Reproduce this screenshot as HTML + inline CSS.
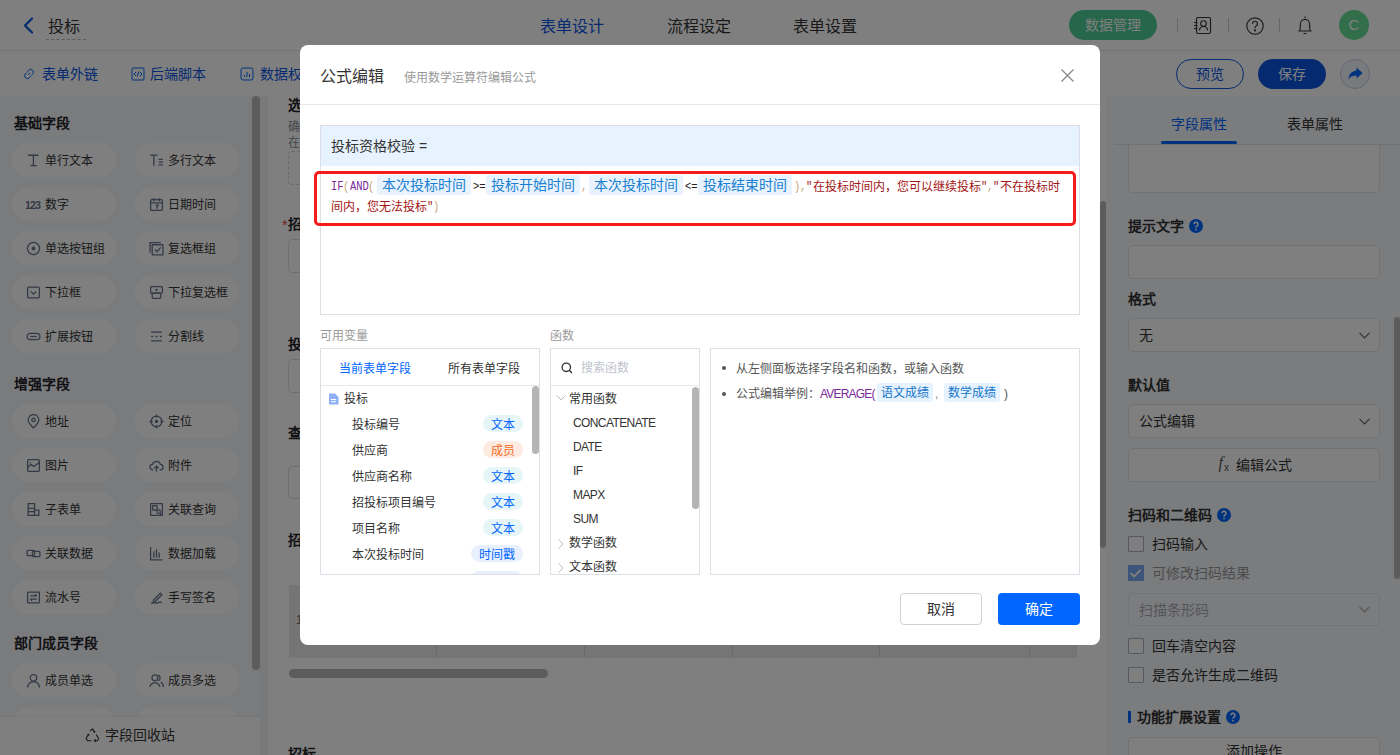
<!DOCTYPE html>
<html lang="zh-CN"><head><meta charset="utf-8">
<style>
*{box-sizing:border-box;margin:0;padding:0}
html,body{width:1400px;height:755px;overflow:hidden;background:#fff;font-family:"Liberation Sans",sans-serif;color:#333;font-size:14px}
.a{position:absolute}
.nw{white-space:nowrap}
/* header */
#hdr{left:0;top:0;width:1400px;height:51px;background:#fff;border-bottom:1px solid #e8e8e8}
#tb{left:0;top:51px;width:1400px;height:45px;background:#fff}
#lp{left:0;top:96px;width:260px;height:659px;background:#f5f7fa}
.sec{font-weight:bold;font-size:14px;color:#1f2329;left:14px}
.pill{height:34px;width:104px;border-radius:17px;background:#fff;font-size:12px;color:#333;line-height:34px}
.pill .ic{position:absolute;left:13.5px;top:10px;width:15px;height:15px}
.pill span{position:absolute;left:33px;top:1px}
#ctr{left:260px;top:96px;width:846px;height:659px;background:#f0f2f5;overflow:hidden}
#rp{left:1106px;top:96px;width:294px;height:659px;background:#f6f8fc;overflow:hidden}
#mask{left:0;top:0;width:1400px;height:755px;background:rgba(0,0,0,0.5)}
#modal{left:300px;top:45px;width:800px;height:600px;background:#fff;border-radius:8px}
.mono{font-family:"Liberation Mono",monospace;font-size:12px;line-height:16px;transform:scaleX(0.875);transform-origin:0 0}
.fcjk{font-size:12px;line-height:16px}
.chip{height:20px;border-radius:3px;background:#e8f3fd;color:#1a7fd0;font-size:14px;line-height:20px;text-align:center}
</style></head>
<body>
<!-- HEADER -->
<div id="hdr" class="a">
  <svg class="a" style="left:22px;top:17px" width="13" height="17" viewBox="0 0 13 17"><path d="M10 1.5 L3 8.5 L10 15.5" fill="none" stroke="#0a55e0" stroke-width="2.2" stroke-linecap="round" stroke-linejoin="round"/></svg>
  <div class="a nw" style="left:48px;top:14.5px;font-size:16px;line-height:24px;color:#333">投标</div>
  <div class="a" style="left:46px;top:39px;width:40px;border-top:1px dashed #bbb"></div>
  <div class="a nw" style="left:540px;top:15px;font-size:16px;line-height:24px;color:#0a55e0">表单设计</div>
  <div class="a nw" style="left:667px;top:15px;font-size:16px;line-height:24px;color:#333">流程设定</div>
  <div class="a nw" style="left:793px;top:15px;font-size:16px;line-height:24px;color:#333">表单设置</div>
  <div class="a nw" style="left:1069px;top:10px;width:88px;height:30px;border-radius:15px;background:#4ccc94;color:#fff;font-size:14px;line-height:30px;text-align:center">数据管理</div>
  <div class="a" style="left:1177px;top:18px;width:1px;height:14px;background:#ccc"></div>
  <div class="a" style="left:1228px;top:18px;width:1px;height:14px;background:#ccc"></div>
  <div class="a" style="left:1279px;top:18px;width:1px;height:14px;background:#ccc"></div>
  
  <svg class="a" style="left:1192px;top:16px" width="20" height="19" viewBox="0 0 20 19" fill="none" stroke="#333" stroke-width="1.15"><rect x="4.5" y="1.5" width="14" height="16" rx="1.5"/><path d="M2 6.5h3.5M2 9.5h3.5M2 12.5h3.5"/><circle cx="11.5" cy="7.5" r="2.8"/><path d="M7.5 14.5c0-2.5 1.8-4 4-4s4 1.5 4 4"/></svg>
  <svg class="a" style="left:1245px;top:16px" width="20" height="20" viewBox="0 0 20 20" fill="none" stroke="#333" stroke-width="1.15"><circle cx="10" cy="10" r="8.2"/><path d="M7.5 7.8a2.5 2.5 0 1 1 3.6 2.2c-.8.4-1.1.9-1.1 1.7v.6"/><circle cx="10" cy="14.4" r="0.5" fill="#333"/></svg>
  <svg class="a" style="left:1297px;top:15px" width="16" height="20" viewBox="0 0 16 20" fill="none" stroke="#333" stroke-width="1.15"><path d="M8 1.5v1.5M2.5 16c.7-1 .9-2.5.9-4.5V9a4.6 4.6 0 0 1 9.2 0v2.5c0 2 .2 3.5.9 4.5zM1.5 16h13M6.5 18.5h3"/></svg>
  <div class="a nw" style="left:1339px;top:10px;width:30px;height:30px;border-radius:15px;background:#66dc94;color:#fff;font-size:15px;line-height:30px;text-align:center">C</div>
</div>
<!-- TOOLBAR -->
<div id="tb" class="a">
  <div class="a nw" style="left:42px;top:13.0px;font-size:14px;line-height:20px;color:#0a55e0">表单外链</div>
  <div class="a nw" style="left:150px;top:13.0px;font-size:14px;line-height:20px;color:#0a55e0">后端脚本</div>
  <div class="a nw" style="left:260px;top:13.0px;font-size:14px;line-height:20px;color:#0a55e0">数据权限</div>
  <div class="a nw" style="left:1176px;top:8.0px;width:68px;height:30px;border-radius:15px;border:1px solid #0a55e0;color:#0a55e0;font-size:14px;line-height:28px;text-align:center">预览</div>
  <div class="a nw" style="left:1258px;top:8.0px;width:68px;height:30px;border-radius:15px;background:#0a55e0;color:#fff;font-size:14px;line-height:30px;text-align:center">保存</div>
  <div class="a" style="left:1340px;top:8.0px;width:30px;height:30px;border-radius:15px;border:1px solid #c8d0e6;background:#f3f5fa"></div>
  <svg class="a" style="left:22px;top:16.0px" width="14" height="14" viewBox="0 0 14 14" fill="none" stroke="#0066ff" stroke-width="1"><path d="M6 8l2-2M5.2 4.8l1.6-1.6a2.6 2.6 0 0 1 3.8 3.8L9 8.6M8.8 9.2l-1.6 1.6a2.6 2.6 0 0 1-3.8-3.8L5 5.4"/></svg>
  <svg class="a" style="left:131px;top:16.0px" width="14" height="14" viewBox="0 0 14 14" fill="none" stroke="#0066ff" stroke-width="1"><rect x="1" y="1" width="12" height="12" rx="1"/><path d="M5 5L3 7l2 2M9 5l2 2-2 2M7.7 4.5L6.3 9.5"/></svg>
  <svg class="a" style="left:240px;top:16.0px" width="14" height="14" viewBox="0 0 14 14" fill="none" stroke="#0066ff" stroke-width="1"><rect x="1" y="1" width="12" height="12" rx="2"/><path d="M4.5 10V8M7 10V5M9.5 10V7"/></svg>
  <svg class="a" style="left:1348px;top:16.0px" width="15" height="13" viewBox="0 0 15 13"><path d="M8.5 0.5L14.5 6 8.5 11.5V8.5C4.5 8.5 2 9.5 0.3 12.5 1 7.5 3.5 4 8.5 3.5z" fill="#0066ff"/></svg>

</div>
<!-- LEFT PANEL -->
<div id="lp" class="a">
<div class="a sec nw" style="top:16px">基础字段</div>
<div class="a pill" style="left:12px;top:47px"><svg class="ic" width="15" height="15" viewBox="0 0 14 14" fill="none" stroke="#67758b" stroke-width="1.2"><path d="M2 2.1h9.7M4 11.8h6M6.9 2.1v9.7" stroke-width="1.2"/></svg><span>单行文本</span></div>
<div class="a pill" style="left:135px;top:47px"><svg class="ic" width="15" height="15" viewBox="0 0 14 14" fill="none" stroke="#67758b" stroke-width="1.2"><path d="M1 2h7M4.5 2v10M9 6h4M9 8.5h4M9 11h4"/></svg><span>多行文本</span></div>
<div class="a pill" style="left:12px;top:91px"><svg class="ic" width="15" height="15" viewBox="0 0 14 14" fill="none" stroke="#67758b" stroke-width="1.2"><text x="-1" y="11" font-size="10" font-weight="bold" textLength="15" fill="#67758b" stroke="none" font-family="Liberation Sans">123</text></svg><span>数字</span></div>
<div class="a pill" style="left:135px;top:91px"><svg class="ic" width="15" height="15" viewBox="0 0 14 14" fill="none" stroke="#67758b" stroke-width="1.2"><rect x="1.5" y="2.5" width="11" height="10" rx="1"/><path d="M1.5 5.5h11M4.5 1v3M9.5 1v3M6 7.5h2.5L7 11"/></svg><span>日期时间</span></div>
<div class="a pill" style="left:12px;top:135px"><svg class="ic" width="15" height="15" viewBox="0 0 14 14" fill="none" stroke="#67758b" stroke-width="1.2"><circle cx="7" cy="7" r="5.7"/><circle cx="7" cy="7" r="1.2" fill="#67758b"/></svg><span>单选按钮组</span></div>
<div class="a pill" style="left:135px;top:135px"><svg class="ic" width="15" height="15" viewBox="0 0 14 14" fill="none" stroke="#67758b" stroke-width="1.2"><path d="M1 11V1.5h10"/><rect x="3" y="3.5" width="10" height="9.5" rx="0.5"/><path d="M5.5 8l2 2 3.5-4"/></svg><span>复选框组</span></div>
<div class="a pill" style="left:12px;top:179px"><svg class="ic" width="15" height="15" viewBox="0 0 14 14" fill="none" stroke="#67758b" stroke-width="1.2"><rect x="1.5" y="2" width="11" height="10" rx="1"/><path d="M4.5 6l2.5 2.5L9.5 6"/></svg><span>下拉框</span></div>
<div class="a pill" style="left:135px;top:179px"><svg class="ic" width="15" height="15" viewBox="0 0 14 14" fill="none" stroke="#67758b" stroke-width="1.2"><rect x="1.5" y="1.5" width="11" height="6" rx="1"/><rect x="3" y="7.5" width="8" height="5" rx="1"/><path d="M6 4l1 1 1-1"/></svg><span>下拉复选框</span></div>
<div class="a pill" style="left:12px;top:223px"><svg class="ic" width="15" height="15" viewBox="0 0 14 14" fill="none" stroke="#67758b" stroke-width="1.2"><rect x="1" y="4" width="12" height="6" rx="3"/><path d="M4 7h6"/></svg><span>扩展按钮</span></div>
<div class="a pill" style="left:135px;top:223px"><svg class="ic" width="15" height="15" viewBox="0 0 14 14" fill="none" stroke="#67758b" stroke-width="1.2"><path d="M2 3h10M2 7h2M6 7h2M10 7h2M2 11h10"/></svg><span>分割线</span></div>
<div class="a sec nw" style="top:277px">增强字段</div>
<div class="a pill" style="left:12px;top:308px"><svg class="ic" width="15" height="15" viewBox="0 0 14 14" fill="none" stroke="#67758b" stroke-width="1.2"><path d="M7 13C4 10 2 7.5 2 5.5a5 5 0 0 1 10 0c0 2-2 4.5-5 7.5z"/><circle cx="7" cy="5.5" r="1.6"/></svg><span>地址</span></div>
<div class="a pill" style="left:135px;top:308px"><svg class="ic" width="15" height="15" viewBox="0 0 14 14" fill="none" stroke="#67758b" stroke-width="1.2"><circle cx="7" cy="7" r="5"/><circle cx="7" cy="7" r="1" fill="#67758b"/><path d="M7 0.5v3M7 10.5v3M0.5 7h3M10.5 7h3"/></svg><span>定位</span></div>
<div class="a pill" style="left:12px;top:352px"><svg class="ic" width="15" height="15" viewBox="0 0 14 14" fill="none" stroke="#67758b" stroke-width="1.2"><rect x="1.5" y="1.5" width="11" height="11" rx="1"/><path d="M1.5 9l3-3 3 2 5-4M3.5 4.5h1"/></svg><span>图片</span></div>
<div class="a pill" style="left:135px;top:352px"><svg class="ic" width="15" height="15" viewBox="0 0 14 14" fill="none" stroke="#67758b" stroke-width="1.2"><path d="M4 11H3.5A2.5 2.5 0 0 1 3.3 6a3.8 3.8 0 0 1 7.4 0A2.5 2.5 0 0 1 10.5 11H10M7 12.5V7.5M5 9.5l2-2 2 2"/></svg><span>附件</span></div>
<div class="a pill" style="left:12px;top:396px"><svg class="ic" width="15" height="15" viewBox="0 0 14 14" fill="none" stroke="#67758b" stroke-width="1.2"><path d="M2 1.5h6v11H2zM2 6h6M8 7.5h4v5H8M2 9h6"/></svg><span>子表单</span></div>
<div class="a pill" style="left:135px;top:396px"><svg class="ic" width="15" height="15" viewBox="0 0 14 14" fill="none" stroke="#67758b" stroke-width="1.2"><rect x="1.5" y="1.5" width="11" height="11" rx="0.5"/><rect x="3.5" y="3.5" width="4" height="4"/><circle cx="9" cy="9" r="1.7"/><path d="M10.3 10.3l2 2"/></svg><span>关联查询</span></div>
<div class="a pill" style="left:12px;top:440px"><svg class="ic" width="15" height="15" viewBox="0 0 14 14" fill="none" stroke="#67758b" stroke-width="1.2"><rect x="1" y="4" width="7" height="5" rx="1"/><rect x="6" y="5" width="7" height="5" rx="1"/></svg><span>关联数据</span></div>
<div class="a pill" style="left:135px;top:440px"><svg class="ic" width="15" height="15" viewBox="0 0 14 14" fill="none" stroke="#67758b" stroke-width="1.2"><path d="M1.5 1v12h11M4.5 5v6M7 3v8M9.5 6v5"/></svg><span>数据加载</span></div>
<div class="a pill" style="left:12px;top:484px"><svg class="ic" width="15" height="15" viewBox="0 0 14 14" fill="none" stroke="#67758b" stroke-width="1.2"><rect x="1.5" y="2" width="11" height="10" rx="0.5"/><path d="M4 5.5h6M10 8.5H4M8.5 4l1.5 1.5M5.5 10L4 8.5"/></svg><span>流水号</span></div>
<div class="a pill" style="left:135px;top:484px"><svg class="ic" width="15" height="15" viewBox="0 0 14 14" fill="none" stroke="#67758b" stroke-width="1.2"><path d="M4 9.5l6.5-6.5 1.5 1.5-6.5 6.5H4zM2 12.5c2-1.5 4 .5 6-.5s3-1 4 0"/></svg><span>手写签名</span></div>
<div class="a sec nw" style="top:536px">部门成员字段</div>
<div class="a pill" style="left:12px;top:567px"><svg class="ic" width="15" height="15" viewBox="0 0 14 14" fill="none" stroke="#67758b" stroke-width="1.2"><circle cx="7" cy="4.5" r="3"/><path d="M1.5 13.5a5.5 5.5 0 0 1 11 0"/></svg><span>成员单选</span></div>
<div class="a pill" style="left:135px;top:567px"><svg class="ic" width="15" height="15" viewBox="0 0 14 14" fill="none" stroke="#67758b" stroke-width="1.2"><circle cx="5.5" cy="4.5" r="2.8"/><path d="M0.8 13a4.8 4.8 0 0 1 9.4 0M8.5 2a2.8 2.8 0 0 1 0 5.3M11 8.5a4.8 4.8 0 0 1 2.4 4.5"/></svg><span>成员多选</span></div>
<div class="a pill" style="left:12px;top:611px"></div><div class="a pill" style="left:135px;top:611px"></div>
<div class="a" style="left:252px;top:0;width:8px;height:574px;border-radius:4px;background:#b9b9b9"></div>
<div class="a" style="left:0;top:621px;width:260px;height:38px;background:#fff;box-shadow:0 -1px 2px rgba(0,0,0,0.05)"><svg class="a" style="left:85px;top:11px" width="15" height="14" viewBox="0 0 15 14" fill="none" stroke="#333" stroke-width="1.1" stroke-linejoin="round"><path d="M5.2 3.2L7.5 0.8 9.6 4.3M8.3 3.9l1.3.4.3-1.4"/><path d="M11.2 6.4l2.5 4.4-1.3 1.9H9.3M10.6 11.4l-1.3 1.3 1.3 1.1"/><path d="M6.3 12.7H2.4L1.1 10.6 3.6 6.2M2.3 6.5l1.3-.3.5 1.3"/></svg><div class="a nw" style="left:105px;top:8px;font-size:14px;line-height:20px;color:#333">字段回收站</div></div>
</div>
<div id="ctr" class="a">
<div class="a" style="left:8px;top:0;width:838px;height:659px;background:#fff"></div>
<div class="a nw" style="left:28px;top:-1px;font-size:14px;font-weight:bold;line-height:20px;color:#1f2329">选择供应商</div>
<div class="a nw" style="left:28px;top:23px;font-size:12px;line-height:16px;color:#8a8f99">确定是否在投标时间内</div>
<div class="a nw" style="left:28px;top:39px;font-size:12px;line-height:16px;color:#8a8f99">在投标时间内可以投标</div>
<div class="a" style="left:28px;top:55px;width:600px;height:34px;border:1px dashed #cfd3da;border-radius:4px"></div>
<div class="a nw" style="left:22px;top:118.5px;font-size:14px;line-height:20px;color:#e53935">*</div>
<div class="a nw" style="left:28px;top:117.5px;font-size:14px;font-weight:bold;line-height:20px;color:#1f2329">招标项目</div>
<div class="a" style="left:28px;top:143px;width:600px;height:34px;border:1px solid #dcdfe6;border-radius:4px"></div>
<div class="a nw" style="left:28px;top:237.5px;font-size:14px;font-weight:bold;line-height:20px;color:#1f2329">投标时间</div>
<div class="a" style="left:28px;top:263px;width:600px;height:34px;border:1px solid #dcdfe6;border-radius:4px"></div>
<div class="a nw" style="left:28px;top:327px;font-size:14px;font-weight:bold;line-height:20px;color:#1f2329">查询</div>
<div class="a" style="left:28px;top:370px;width:600px;height:33px;border:1px solid #dcdfe6;border-radius:4px"></div>
<div class="a nw" style="left:28px;top:433.5px;font-size:14px;font-weight:bold;line-height:20px;color:#1f2329">招标明细</div>
<div class="a" style="left:29px;top:489px;width:788px;height:73px;background:#ebebeb"></div>

<div class="a" style="left:176.0px;top:489px;width:1px;height:73px;background:#d5d6d8"></div>
<div class="a" style="left:324.0px;top:489px;width:1px;height:73px;background:#d5d6d8"></div>
<div class="a" style="left:471.5px;top:489px;width:1px;height:73px;background:#d5d6d8"></div>
<div class="a" style="left:619.0px;top:489px;width:1px;height:73px;background:#d5d6d8"></div>
<div class="a" style="left:768.8px;top:489px;width:1px;height:73px;background:#d5d6d8"></div>
<div class="a nw" style="left:36px;top:516px;font-size:12px;line-height:16px;color:#666">1</div>
<div class="a" style="left:29px;top:573px;width:259px;height:9px;border-radius:4.5px;background:#b9b9b9"></div>
<div class="a nw" style="left:28px;top:648px;font-size:14px;font-weight:bold;line-height:20px;color:#1f2329">招标</div>
<div class="a" style="left:840px;top:105px;width:6px;height:347px;border-radius:3px;background:#b9b9b9"></div>
</div>
<div id="rp" class="a">
<div class="a" style="left:0;top:0;width:294px;height:48px;background:#f6f8fc"></div>
<div class="a" style="left:22.0px;top:42.0px;width:252px;height:55px;background:#fff;border:1px solid #e3e5e9;border-radius:4px"></div>
<div class="a" style="left:0;top:0;width:294px;height:48px;background:#f6f8fc"></div>
<div class="a nw" style="left:65.0px;top:18.0px;font-size:14px;line-height:20px;color:#0066ff;">字段属性</div>
<div class="a nw" style="left:180.6px;top:18.0px;font-size:14px;line-height:20px;color:#333;">表单属性</div>
<div class="a" style="left:8px;top:48px;width:286px;height:1px;background:#e3e5e9"></div>
<div class="a" style="left:55px;top:45px;width:76px;height:3px;border-radius:1.5px;background:#0066ff"></div>
<div class="a nw" style="left:22.0px;top:120.0px;font-size:14px;line-height:20px;color:#333;font-weight:bold;">提示文字</div>
<svg class="a" style="left:83.3px;top:123.3px" width="14" height="14" viewBox="0 0 14 14"><circle cx="7" cy="7" r="7" fill="#0066ff"/><path d="M5 5.3a2 2 0 1 1 2.9 1.8c-.6.3-.9.7-.9 1.3v.4" fill="none" stroke="#fff" stroke-width="1.5"/><circle cx="7" cy="10.6" r="0.9" fill="#fff"/></svg>
<div class="a" style="left:22.0px;top:149.0px;width:252px;height:34px;background:#fff;border:1px solid #e3e5e9;border-radius:4px"></div>
<div class="a nw" style="left:22.0px;top:193.0px;font-size:14px;line-height:20px;color:#333;font-weight:bold;">格式</div>
<div class="a" style="left:22.0px;top:222.0px;width:252px;height:34px;background:#fff;border:1px solid #e3e5e9;border-radius:4px"></div>
<div class="a nw" style="left:32.6px;top:229.0px;font-size:14px;line-height:20px;color:#333;">无</div>
<svg class="a" style="left:253.0px;top:236.0px" width="11" height="7" viewBox="0 0 11 7"><path d="M0.5 0.8l5 5 5-5" fill="none" stroke="#666" stroke-width="1.2"/></svg>
<div class="a nw" style="left:22.0px;top:279.0px;font-size:14px;line-height:20px;color:#333;font-weight:bold;">默认值</div>
<div class="a" style="left:22.0px;top:308.0px;width:252px;height:34px;background:#fff;border:1px solid #e3e5e9;border-radius:4px"></div>
<div class="a nw" style="left:32.6px;top:315.0px;font-size:14px;line-height:20px;color:#333;">公式编辑</div>
<svg class="a" style="left:253.0px;top:322.0px" width="11" height="7" viewBox="0 0 11 7"><path d="M0.5 0.8l5 5 5-5" fill="none" stroke="#666" stroke-width="1.2"/></svg>
<div class="a" style="left:22.0px;top:352.0px;width:252px;height:34px;background:#fff;border:1px solid #e3e5e9;border-radius:4px"></div>
<div class="a nw" style="left:112.5px;top:357px;font-family:'Liberation Serif',serif;font-style:italic;font-size:16px;line-height:20px;color:#555">f<span style="font-size:10px;font-style:normal;font-family:'Liberation Sans';position:relative;top:3px;left:1px">x</span></div>
<div class="a nw" style="left:129.8px;top:359.0px;font-size:14px;line-height:20px;color:#333;">编辑公式</div>
<div class="a nw" style="left:22.0px;top:409.0px;font-size:14px;line-height:20px;color:#333;font-weight:bold;">扫码和二维码</div>
<svg class="a" style="left:111.3px;top:412.0px" width="14" height="14" viewBox="0 0 14 14"><circle cx="7" cy="7" r="7" fill="#0066ff"/><path d="M5 5.3a2 2 0 1 1 2.9 1.8c-.6.3-.9.7-.9 1.3v.4" fill="none" stroke="#fff" stroke-width="1.5"/><circle cx="7" cy="10.6" r="0.9" fill="#fff"/></svg>
<div class="a" style="left:22.0px;top:440.0px;width:16px;height:16px;border:1.3px solid #a9b0c2;border-radius:1px;background:#fff"></div>
<div class="a nw" style="left:46.0px;top:438.0px;font-size:14px;line-height:20px;color:#333;">扫码输入</div>
<svg class="a" style="left:22.0px;top:469.0px" width="16" height="16" viewBox="0 0 16 16"><rect width="16" height="16" rx="1" fill="#7aa8f5"/><path d="M2.5 7.8l3.6 3.6 6.6-6.6" fill="none" stroke="#fff" stroke-width="1.9"/></svg>
<div class="a nw" style="left:46.0px;top:467.0px;font-size:14px;line-height:20px;color:#999;">可修改扫码结果</div>
<div class="a" style="left:22.0px;top:497.0px;width:252px;height:33px;background:#f7f8fa;border:1px solid #e6e8eb;border-radius:4px"></div>
<div class="a nw" style="left:33.0px;top:503.5px;font-size:14px;line-height:20px;color:#a8abb2;">扫描条形码</div>
<svg class="a" style="left:253.0px;top:510.0px" width="11" height="7" viewBox="0 0 11 7"><path d="M0.5 0.8l5 5 5-5" fill="none" stroke="#aaa" stroke-width="1.2"/></svg>
<div class="a" style="left:22.0px;top:542.0px;width:16px;height:16px;border:1.3px solid #a9b0c2;border-radius:1px;background:#fff"></div>
<div class="a nw" style="left:46.0px;top:540.0px;font-size:14px;line-height:20px;color:#333;">回车清空内容</div>
<div class="a" style="left:22.0px;top:571.0px;width:16px;height:16px;border:1.3px solid #a9b0c2;border-radius:1px;background:#fff"></div>
<div class="a nw" style="left:46.0px;top:569.0px;font-size:14px;line-height:20px;color:#333;">是否允许生成二维码</div>
<div class="a" style="left:22px;top:615px;width:3px;height:12px;background:#0066ff"></div>
<div class="a nw" style="left:31.4px;top:611.0px;font-size:14px;line-height:20px;color:#333;font-weight:bold;">功能扩展设置</div>
<svg class="a" style="left:120.0px;top:614.0px" width="14" height="14" viewBox="0 0 14 14"><circle cx="7" cy="7" r="7" fill="#0066ff"/><path d="M5 5.3a2 2 0 1 1 2.9 1.8c-.6.3-.9.7-.9 1.3v.4" fill="none" stroke="#fff" stroke-width="1.5"/><circle cx="7" cy="10.6" r="0.9" fill="#fff"/></svg>
<div class="a" style="left:22.0px;top:640.5px;width:252px;height:34px;background:#fff;border:1px solid #e3e5e9;border-radius:4px"></div>
<div class="a nw" style="left:120.0px;top:645.0px;font-size:14px;line-height:20px;color:#333;">添加操作</div>
<div class="a" style="left:288px;top:221px;width:6px;height:262px;border-radius:3px;background:#b9b9b9"></div>
</div>
<div id="mask" class="a"></div>
<div id="modal" class="a">
<div class="a nw" style="left:20px;top:20px;font-size:16px;line-height:24px;color:#333">公式编辑</div>
<div class="a nw" style="left:104px;top:24px;font-size:12px;line-height:18px;color:#999">使用数学运算符编辑公式</div>
<svg class="a" style="left:760px;top:23px" width="15" height="15" viewBox="0 0 15 15"><path d="M1.5 1.5L13.5 13.5M13.5 1.5L1.5 13.5" stroke="#888" stroke-width="1.3"/></svg>
<div class="a" style="left:0;top:59px;width:800px;height:1px;background:#e8e8e8"></div>
<div class="a" style="left:20px;top:80px;width:760px;height:190px;border:1px solid #dcdfe6"></div>
<div class="a" style="left:21px;top:81px;width:758px;height:40px;background:#e6f2fd"></div>
<div class="a nw" style="left:31px;top:91px;font-size:14px;line-height:20px;color:#333">投标资格校验 =</div>
<div class="a nw mono" style="left:30.6px;top:134px;color:#7a2a9a">IF</div>
<div class="a nw mono" style="left:43.2px;top:134px;color:#c8a57c">(</div>
<div class="a nw mono" style="left:49.5px;top:134px;color:#7a2a9a">AND</div>
<div class="a nw mono" style="left:68.4px;top:134px;color:#c8a57c">(</div>
<div class="a nw chip" style="left:77.0px;top:130px;width:94px">本次投标时间</div>
<div class="a nw mono" style="left:173.0px;top:134px;color:#222">&gt;=</div>
<div class="a nw chip" style="left:186.3px;top:130px;width:94px">投标开始时间</div>
<div class="a nw mono" style="left:280.5px;top:134px;color:#c8a57c">,</div>
<div class="a nw chip" style="left:289.0px;top:130px;width:94px">本次投标时间</div>
<div class="a nw mono" style="left:384.9px;top:134px;color:#222">&lt;=</div>
<div class="a nw chip" style="left:398.0px;top:130px;width:94px">投标结束时间</div>
<div class="a nw mono" style="left:493.7px;top:134px;color:#c8a57c">)</div>
<div class="a nw mono" style="left:500.0px;top:134px;color:#c8a57c">,</div>
<div class="a nw mono" style="left:506.3px;top:134px;color:#a31515">"</div>
<div class="a nw fcjk" style="left:512.6px;top:134px;color:#a31515">在投标时间内，您可以继续投标</div>
<div class="a nw mono" style="left:680.6px;top:134px;color:#a31515">"</div>
<div class="a nw mono" style="left:686.9px;top:134px;color:#c8a57c">,</div>
<div class="a nw mono" style="left:693.2px;top:134px;color:#a31515">"</div>
<div class="a nw fcjk" style="left:699.5px;top:134px;color:#a31515">不在投标时</div>
<div class="a nw fcjk" style="left:30.6px;top:154px;color:#a31515">间内，您无法投标</div>
<div class="a nw mono" style="left:126.6px;top:154px;color:#a31515">"</div>
<div class="a nw mono" style="left:132.9px;top:154px;color:#c8a57c">)</div>
<div class="a" style="left:14px;top:126px;width:762px;height:55px;border:3px solid #f51b1b;border-radius:5px"></div>
<div class="a nw" style="left:20px;top:282px;font-size:12px;line-height:18px;color:#999">可用变量</div>
<div class="a nw" style="left:250px;top:282px;font-size:12px;line-height:18px;color:#999">函数</div>
<div class="a" style="left:20px;top:303px;width:220px;height:227px;border:1px solid #dcdfe6;overflow:hidden">
<div class="a nw" style="left:18px;top:11px;font-size:12px;line-height:18px;color:#0066ff">当前表单字段</div>
<div class="a nw" style="left:127px;top:11px;font-size:12px;line-height:18px;color:#333">所有表单字段</div>
<div class="a" style="left:0;top:36px;width:218px;height:1px;background:#e8e8e8"></div>
<svg class="a" style="left:7px;top:44px" width="11" height="12" viewBox="0 0 11 12"><path d="M1 0.5h6l3.5 3.5v7.5H1z" fill="#8fb0f7"/><path d="M3 6.5h5M3 8.7h5" stroke="#fff" stroke-width="1"/></svg>
<div class="a nw" style="left:23px;top:41px;font-size:12px;line-height:18px;color:#333">投标</div>
<div class="a nw" style="left:31px;top:66.8px;font-size:12px;line-height:18px;color:#333">投标编号</div>
<div class="a nw" style="left:162px;top:66.3px;width:40px;height:17px;border-radius:9px;padding-top:1px;background:#e6f6f8;color:#0066ff;font-size:12px;line-height:17px;text-align:center;box-sizing:border-box;height:17px;line-height:16px;padding-top:1.5px;">文本</div>
<div class="a nw" style="left:31px;top:92.8px;font-size:12px;line-height:18px;color:#333">供应商</div>
<div class="a nw" style="left:162px;top:92.3px;width:40px;height:17px;border-radius:9px;padding-top:1px;background:#fdebe1;color:#f56c1a;font-size:12px;line-height:17px;text-align:center;box-sizing:border-box;height:17px;line-height:16px;padding-top:1.5px;">成员</div>
<div class="a nw" style="left:31px;top:118.8px;font-size:12px;line-height:18px;color:#333">供应商名称</div>
<div class="a nw" style="left:162px;top:118.3px;width:40px;height:17px;border-radius:9px;padding-top:1px;background:#e6f6f8;color:#0066ff;font-size:12px;line-height:17px;text-align:center;box-sizing:border-box;height:17px;line-height:16px;padding-top:1.5px;">文本</div>
<div class="a nw" style="left:31px;top:144.8px;font-size:12px;line-height:18px;color:#333">招投标项目编号</div>
<div class="a nw" style="left:162px;top:144.3px;width:40px;height:17px;border-radius:9px;padding-top:1px;background:#e6f6f8;color:#0066ff;font-size:12px;line-height:17px;text-align:center;box-sizing:border-box;height:17px;line-height:16px;padding-top:1.5px;">文本</div>
<div class="a nw" style="left:31px;top:170.8px;font-size:12px;line-height:18px;color:#333">项目名称</div>
<div class="a nw" style="left:162px;top:170.3px;width:40px;height:17px;border-radius:9px;padding-top:1px;background:#e6f6f8;color:#0066ff;font-size:12px;line-height:17px;text-align:center;box-sizing:border-box;height:17px;line-height:16px;padding-top:1.5px;">文本</div>
<div class="a nw" style="left:31px;top:196.8px;font-size:12px;line-height:18px;color:#333">本次投标时间</div>
<div class="a nw" style="left:150px;top:196.3px;width:52px;height:17px;border-radius:9px;padding-top:1px;background:#e8f0fd;color:#0066ff;font-size:12px;line-height:17px;text-align:center;box-sizing:border-box;height:17px;line-height:16px;padding-top:1.5px;">时间戳</div>
<div class="a" style="left:150px;top:222px;width:52px;height:17px;border-radius:9px;padding-top:1px;background:#e8f0fd"></div>
<div class="a" style="left:210.5px;top:37px;width:7.5px;height:68px;border-radius:4px;background:#b5b5b5"></div>
</div>
<div class="a" style="left:250px;top:303px;width:150px;height:227px;border:1px solid #dcdfe6;overflow:hidden">
<svg class="a" style="left:10px;top:13px" width="12" height="12" viewBox="0 0 12 12"><circle cx="5.3" cy="5.3" r="4.2" fill="none" stroke="#333" stroke-width="1.3"/><path d="M8.3 8.3L11 11" stroke="#333" stroke-width="1.3"/></svg>
<div class="a nw" style="left:30px;top:10px;font-size:12px;line-height:18px;color:#c0c4cc">搜索函数</div>
<div class="a" style="left:0;top:36px;width:148px;height:1px;background:#e8e8e8"></div>
<svg class="a" style="left:5px;top:46px" width="10" height="6" viewBox="0 0 10 6"><path d="M0.5 0.5l4.5 4.5 4.5-4.5" fill="none" stroke="#bbb" stroke-width="1"/></svg>
<div class="a nw" style="left:18px;top:40.5px;font-size:12px;line-height:18px;color:#333">常用函数</div>
<div class="a nw" style="left:22px;top:64.6px;font-size:12px;line-height:18px;color:#333;letter-spacing:-0.6px">CONCATENATE</div>
<div class="a nw" style="left:22px;top:88.6px;font-size:12px;line-height:18px;color:#333;letter-spacing:-0.6px">DATE</div>
<div class="a nw" style="left:22px;top:112.6px;font-size:12px;line-height:18px;color:#333;letter-spacing:-0.6px">IF</div>
<div class="a nw" style="left:22px;top:136.6px;font-size:12px;line-height:18px;color:#333;letter-spacing:-0.6px">MAPX</div>
<div class="a nw" style="left:22px;top:160.6px;font-size:12px;line-height:18px;color:#333;letter-spacing:-0.6px">SUM</div>
<svg class="a" style="left:7px;top:189.5px" width="6" height="10" viewBox="0 0 6 10"><path d="M0.5 0.5l4.5 4.5-4.5 4.5" fill="none" stroke="#bbb" stroke-width="1"/></svg>
<div class="a nw" style="left:18px;top:184.5px;font-size:12px;line-height:18px;color:#333">数学函数</div>
<svg class="a" style="left:7px;top:213.5px" width="6" height="10" viewBox="0 0 6 10"><path d="M0.5 0.5l4.5 4.5-4.5 4.5" fill="none" stroke="#bbb" stroke-width="1"/></svg>
<div class="a nw" style="left:18px;top:208.5px;font-size:12px;line-height:18px;color:#333">文本函数</div>
<div class="a" style="left:141px;top:38px;width:7px;height:122px;border-radius:4px;background:#b5b5b5"></div>
</div>
<div class="a" style="left:410px;top:303px;width:370px;height:227px;border:1px solid #dcdfe6;overflow:hidden">
<div class="a" style="left:11px;top:17px;width:4px;height:4px;border-radius:2px;background:#555"></div>
<div class="a nw" style="left:25px;top:11px;font-size:12px;line-height:18px;color:#555">从左侧面板选择字段名和函数，或输入函数</div>
<div class="a" style="left:11px;top:43px;width:4px;height:4px;border-radius:2px;background:#555"></div>
<div class="a nw" style="left:25px;top:36px;font-size:12px;line-height:18px;color:#555">公式编辑举例：<span style="color:#7a2a9a;letter-spacing:-0.8px">AVERAGE(</span></div>
<div class="a nw" style="left:166px;top:34px;width:56px;height:19px;border-radius:3px;background:#e6f2fd;color:#1677cc;font-size:12px;line-height:21px;text-align:center">语文成绩</div>
<div class="a nw" style="left:224px;top:36px;font-size:12px;line-height:18px;color:#888">,</div>
<div class="a nw" style="left:233px;top:34px;width:56px;height:19px;border-radius:3px;background:#e6f2fd;color:#1677cc;font-size:12px;line-height:21px;text-align:center">数学成绩</div>
<div class="a nw" style="left:293px;top:36px;font-size:12px;line-height:18px;color:#555">)</div>
</div>
<div class="a nw" style="left:600px;top:548px;width:82px;height:32px;border:1px solid #d0d0d0;border-radius:4px;font-size:14px;line-height:30px;text-align:center;color:#333">取消</div>
<div class="a nw" style="left:698px;top:548px;width:82px;height:32px;background:#0066ff;border-radius:4px;font-size:14px;line-height:32px;text-align:center;color:#fff">确定</div>
</div>
</body></html>
